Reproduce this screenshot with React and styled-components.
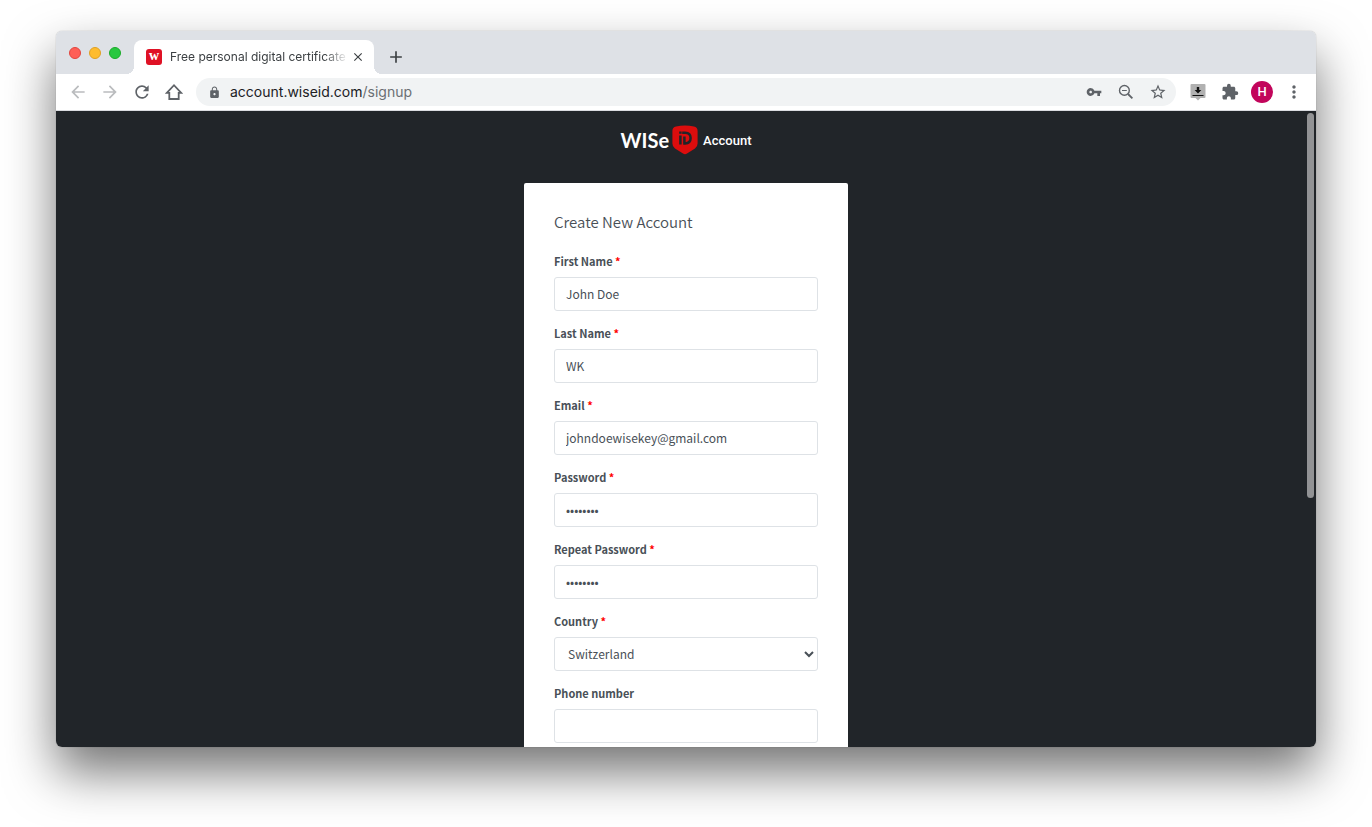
import { useId } from "react";
import styled, { createGlobalStyle } from "styled-components";
import {
  MdAdd,
  MdArrowBack,
  MdArrowForward,
  MdClose,
  MdExtension,
  MdLock,
  MdMoreVert,
  MdRefresh,
  MdStarBorder,
  MdVpnKey,
} from "react-icons/md";

const fields = [
  { label: "First Name", required: true, value: "John Doe" },
  { label: "Last Name", required: true, value: "WK" },
  { label: "Email", required: true, type: "email", value: "johndoewisekey@gmail.com" },
  { label: "Password", required: true, type: "password", value: "12345678" },
  { label: "Repeat Password", required: true, type: "password", value: "12345678" },
  { label: "Country", required: true, options: ["Switzerland", "France", "Germany"] },
  { label: "Phone number", type: "tel", value: "" },
];

const TabStrip = () => (
  <Strip>
    <Lights>
      <Light $color="#fe5f57" $edge="#e2453e" aria-label="Close window" />
      <Light $color="#febc2e" $edge="#dfa023" aria-label="Minimize window" />
      <Light $color="#28c840" $edge="#1aab29" aria-label="Zoom window" />
    </Lights>
    <Tab>
      <Favicon>w</Favicon>
      <TabTitle>Free personal digital certificate</TabTitle>
      <IconButton $size={16} $color="#3c4043" aria-label="Close tab">
        <MdClose size={14} />
      </IconButton>
    </Tab>
    <IconButton $size={28} $color="#3c4043" aria-label="New tab">
      <MdAdd size={20} />
    </IconButton>
  </Strip>
);

const Toolbar = () => (
  <Bar>
    <IconButton $color="#babcbe" aria-label="Back">
      <MdArrowBack size={20} />
    </IconButton>
    <IconButton $color="#babcbe" aria-label="Forward">
      <MdArrowForward size={20} />
    </IconButton>
    <IconButton aria-label="Reload">
      <MdRefresh size={20} />
    </IconButton>
    <IconButton aria-label="Home">
      <HomeIcon />
    </IconButton>
    <AddressBar>
      <MdLock size={13} />
      <Address>
        account.wiseid.com<span>/signup</span>
      </Address>
      <IconButton aria-label="Passwords">
        <MdVpnKey size={16} />
      </IconButton>
      <IconButton aria-label="Zoom">
        <ZoomOutIcon />
      </IconButton>
      <IconButton aria-label="Bookmark">
        <MdStarBorder size={18} />
      </IconButton>
    </AddressBar>
    <IconButton aria-label="Downloads">
      <DownloadIcon />
    </IconButton>
    <IconButton aria-label="Extensions">
      <MdExtension size={18} />
    </IconButton>
    <IconButton aria-label="Profile">
      <Avatar>H</Avatar>
    </IconButton>
    <IconButton aria-label="Menu">
      <MdMoreVert size={20} />
    </IconButton>
  </Bar>
);

const HomeIcon = () => (
  <svg width="18" height="18" viewBox="0 0 18 18" aria-hidden="true">
    <path
      d="M1.8 9.8L9 2.2L16.2 9.8H13.7V16H4.3V9.8Z"
      fill="none"
      stroke="currentColor"
      strokeWidth="1.8"
    />
  </svg>
);

const ZoomOutIcon = () => (
  <svg width="16" height="16" viewBox="0 0 16 16" aria-hidden="true">
    <g fill="none" stroke="currentColor">
      <circle cx="6.4" cy="6.4" r="4.9" strokeWidth="1.4" />
      <path d="M10 10L14.4 14.4" strokeWidth="1.8" />
      <path d="M4 6.5H8.8" strokeWidth="1.1" />
    </g>
  </svg>
);

const DownloadIcon = () => (
  <svg width="16" height="18" viewBox="0 0 16 18" aria-hidden="true">
    <rect x="0.5" y="1" width="15" height="14" rx="1" fill="#b1b1b1" />
    <path d="M5.5 15h5L8 17.5z" fill="#b1b1b1" />
    <path d="M6.8 4h2.4v3h2.2L8 10.6 4.6 7h2.2z" fill="#111" />
    <path d="M2.5 12.5h11" stroke="#111" strokeWidth="1.2" />
  </svg>
);

const Logo = () => (
  <Brand href="#">
    <Wordmark>WISe</Wordmark>
    <svg width="26" height="30" viewBox="0 0 26 30" role="img" aria-label="iD">
      <path
        d="M4 1.6Q13 -0.6 22 1.6Q25.6 2.4 25.6 6V18.5Q25.6 21.6 23 23.4L15 28.6Q13 29.9 11 28.6L3 23.4Q0.4 21.6 0.4 18.5V6Q0.4 2.4 4 1.6Z"
        fill="#dc0d0d"
      />
      <g fill="none" stroke="#212529" strokeWidth="2.5">
        <path d="M8.4 10.4V19.6M8.4 6.4V8.8" />
        <path d="M12.4 11.6V18.4M10.2 7.8H13.2Q18.6 7.8 18.6 13.1Q18.6 18.4 13.2 18.4H11.2" />
      </g>
    </svg>
    <Product>Account</Product>
  </Brand>
);

const Field = ({ label, required, options, type = "text", value }) => {
  const id = useId();
  return (
    <FieldGroup>
      <Label htmlFor={id}>
        {label} {required && <Star>*</Star>}
      </Label>
      {options ? (
        <Select id={id} defaultValue={options[0]}>
          {options.map((option) => (
            <option key={option}>{option}</option>
          ))}
        </Select>
      ) : (
        <Input id={id} type={type} defaultValue={value} />
      )}
    </FieldGroup>
  );
};

const App = () => (
  <>
    <GlobalStyle />
    <Desktop>
      <Browser>
        <TabStrip />
        <Toolbar />
        <Page>
          <Logo />
          <Card>
            <Title>Create New Account</Title>
            {fields.map((field) => (
              <Field key={field.label} {...field} />
            ))}
          </Card>
          <ScrollThumb />
        </Page>
      </Browser>
    </Desktop>
  </>
);

const GlobalStyle = createGlobalStyle`
  *,
  *::before,
  *::after {
    box-sizing: border-box;
  }

  body {
    margin: 0;
    background: #fff;
    font-family: Inter, "Liberation Sans", sans-serif;
  }
`;

const Desktop = styled.div`
  display: flex;
  height: 100vh;
  padding: 31px 56px 80px;
  overflow: hidden;
`;

const Browser = styled.div`
  flex: 1;
  min-width: 0;
  display: flex;
  flex-direction: column;
  border-radius: 6px;
  overflow: hidden;
  box-shadow: 0 0 1px rgba(0, 0, 0, 0.4), 0 25px 50px rgba(0, 0, 0, 0.55);
`;

const Strip = styled.div`
  display: flex;
  align-items: flex-end;
  height: 43px;
  background: #dee1e6;

  > button {
    margin: 0 0 3px 8px;
  }
`;

const Lights = styled.div`
  display: flex;
  gap: 8px;
  width: 78px;
  padding: 0 0 15px 13px;
`;

const Light = styled.button`
  width: 12px;
  height: 12px;
  padding: 0;
  border: 1px solid ${({ $edge }) => $edge};
  border-radius: 50%;
  background: ${({ $color }) => $color};
`;

const Tab = styled.div`
  position: relative;
  display: flex;
  align-items: center;
  width: 240px;
  height: 34px;
  padding: 0 8px 0 12px;
  border-radius: 8px 8px 0 0;
  background: #fff;

  /* the curved feet at both sides of the active tab */
  &::before,
  &::after {
    content: "";
    position: absolute;
    bottom: 0;
    width: 8px;
    height: 8px;
  }

  &::before {
    right: 100%;
    background: radial-gradient(circle at 0 0, transparent 8px, #fff 8px);
  }

  &::after {
    left: 100%;
    background: radial-gradient(circle at 100% 0, transparent 8px, #fff 8px);
  }
`;

const Favicon = styled.span`
  width: 16px;
  height: 16px;
  border-radius: 3px;
  background: #df1125;
  color: #fff;
  font: bold 14px/14px "Liberation Serif", serif;
  text-align: center;
`;

const TabTitle = styled.span`
  flex: 1;
  min-width: 0;
  margin: 0 2px 0 8px;
  overflow: hidden;
  color: #3c4043;
  font-size: 12px;
  line-height: 16px;
  white-space: nowrap;
  mask-image: linear-gradient(to right, #000 calc(100% - 24px), transparent);
`;

const IconButton = styled.button`
  display: inline-flex;
  align-items: center;
  justify-content: center;
  flex: none;
  width: ${({ $size = 32 }) => $size}px;
  height: ${({ $size = 32 }) => $size}px;
  padding: 0;
  border: none;
  background: none;
  color: ${({ $color = "#5f6368" }) => $color};
`;

const Bar = styled.div`
  display: flex;
  align-items: center;
  height: 37px;
  padding: 0 6px;
  border-bottom: 1px solid #dadce0;
  background: #fff;
`;

const AddressBar = styled.div`
  flex: 1;
  min-width: 0;
  display: flex;
  align-items: center;
  height: 28px;
  margin: 0 6px;
  padding: 0 2px 0 12px;
  border-radius: 14px;
  background: #f1f3f4;
  color: #5f6368;
`;

const Address = styled.span`
  flex: 1;
  min-width: 0;
  margin-left: 9px;
  overflow: hidden;
  color: #202124;
  font-size: 14px;
  line-height: 20px;
  white-space: nowrap;

  span {
    color: #6b6f73;
  }
`;

const Avatar = styled.span`
  width: 22px;
  height: 22px;
  border-radius: 50%;
  background: #c2055b;
  color: #fff;
  font: 500 13px/22px Roboto, sans-serif;
`;

const Page = styled.main`
  position: relative;
  flex: 1;
  min-height: 0;
  display: flex;
  flex-direction: column;
  align-items: center;
  background: #212529;
  overflow: hidden;
`;

const Brand = styled.a`
  flex: none;
  display: flex;
  align-items: center;
  height: 30px;
  margin: 14px 0 28px;
  color: #fff;
  text-decoration: none;
`;

const Wordmark = styled.span`
  margin-right: 3px;
  font: bold 20px/30px Lato, sans-serif;
`;

const Product = styled.span`
  margin-left: 5px;
  padding-top: 2px;
  font: 500 13px/30px Roboto, sans-serif;
`;

const Card = styled.form`
  flex: none;
  width: 324px;
  padding: 29px 30px 30px;
  border-radius: 2px;
  background: #fff;
  color: #495057;
  font-family: "Noto Sans CJK JP", "Noto Sans", sans-serif;
`;

const Title = styled.h1`
  margin: 0 0 19px;
  font-size: 15px;
  font-weight: 350;
  line-height: 20px;
`;

const FieldGroup = styled.div`
  display: flex;
  flex-direction: column;
  gap: 6px;
  margin-bottom: 12px;
`;

const Label = styled.label`
  font-size: 11px;
  font-weight: 600;
  line-height: 20px;
`;

const Star = styled.span`
  color: #f00;
`;

const Input = styled.input`
  width: 100%;
  height: 34px;
  padding: 0 11px 2px;
  border: 1px solid #dee2e6;
  border-radius: 3px;
  background: #fff;
  color: #495057;
  font-family: inherit;
  font-size: 12px;
`;

const Select = styled(Input).attrs({ as: "select" })`
  padding: 0 0 2px 9px;
`;

const ScrollThumb = styled.div`
  position: absolute;
  top: 2px;
  right: 2px;
  width: 7px;
  height: 60.5%;
  border-radius: 4px;
  background: #929395;
`;

export default App;
